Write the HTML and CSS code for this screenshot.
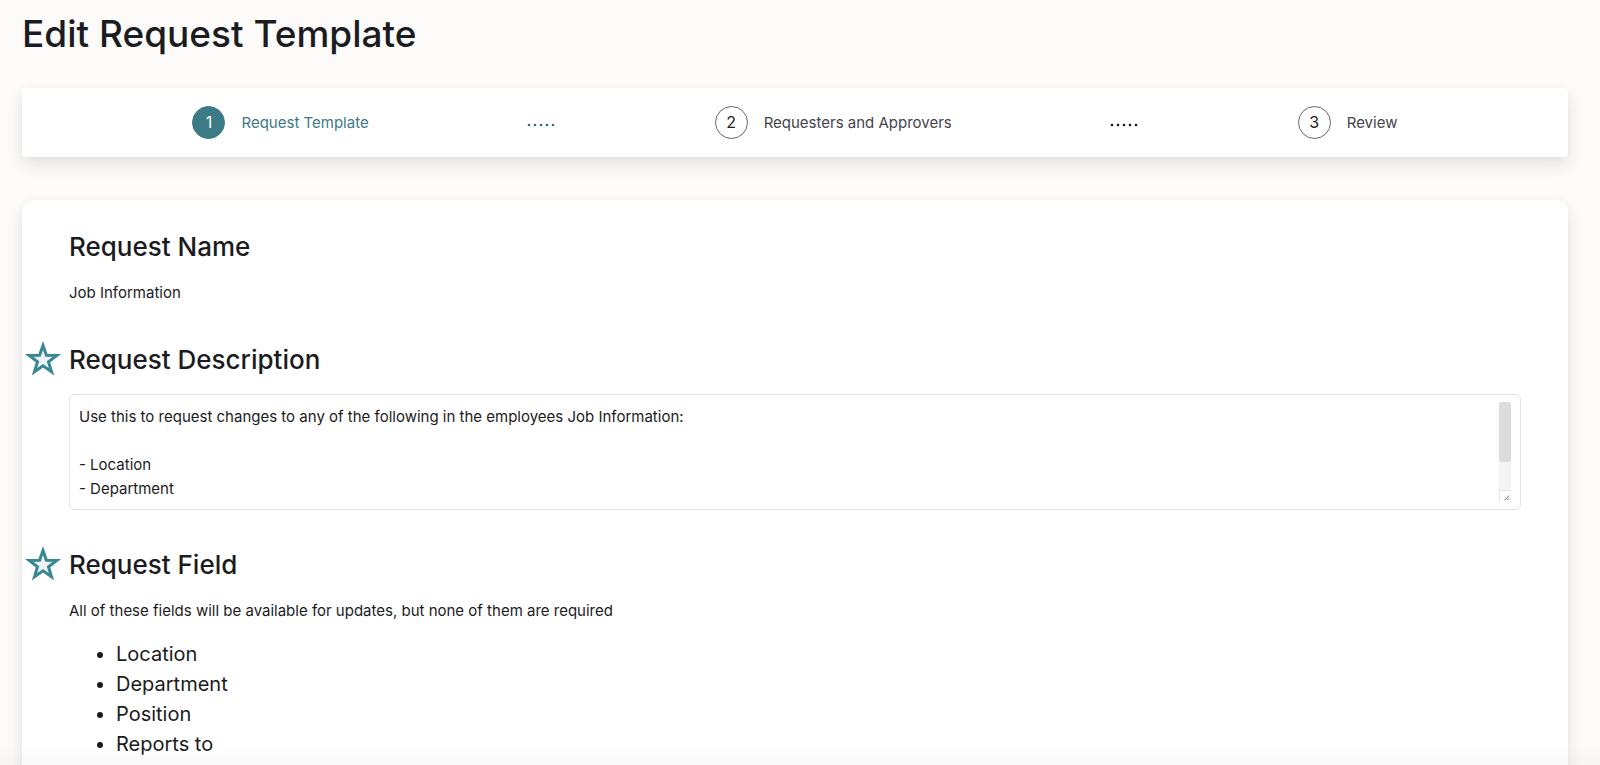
FILE: index.html
```html
<!DOCTYPE html>
<html lang="en">
<head>
    <meta charset="UTF-8">
    <meta name="viewport" content="width=device-width, initial-scale=1.0">
    <title>Edit Request Template</title>
    <link rel="stylesheet" href="styles.css">
</head>
<body>
    <main class="page">
        <h1>Edit Request Template</h1>

        <!-- Wizard steps -->
        <div class="stepper">
            <div class="step active">
                <span class="step-number">1</span>
                <span class="step-label">Request Template</span>
            </div>
            <svg class="dots active" width="29" height="5" viewBox="0 0 29 5" aria-hidden="true">
                <circle cx="2" cy="3" r="1.3"/><circle cx="8" cy="3" r="1.3"/><circle cx="14" cy="3" r="1.3"/><circle cx="20" cy="3" r="1.3"/><circle cx="26" cy="3" r="1.3"/>
            </svg>
            <div class="step">
                <span class="step-number">2</span>
                <span class="step-label">Requesters and Approvers</span>
            </div>
            <svg class="dots" width="29" height="5" viewBox="0 0 29 5" aria-hidden="true">
                <circle cx="2" cy="3" r="1.3"/><circle cx="8" cy="3" r="1.3"/><circle cx="14" cy="3" r="1.3"/><circle cx="20" cy="3" r="1.3"/><circle cx="26" cy="3" r="1.3"/>
            </svg>
            <div class="step">
                <span class="step-number">3</span>
                <span class="step-label">Review</span>
            </div>
        </div>

        <div class="card">
            <section class="section">
                <h2>Request Name</h2>
                <p>Job Information</p>
            </section>

            <section class="section">
                <h2>
                    <svg class="star" viewBox="0 0 38 36" aria-hidden="true">
                        <path d="M19 5.5 L22.4 15.3 L32.8 15.5 L24.5 21.8 L27.5 31.7 L19 25.8 L10.5 31.7 L13.5 21.8 L5.2 15.5 L15.6 15.3 Z"/>
                    </svg>
                    <label for="description">Request Description</label>
                </h2>
                <div class="text-box">
                    <textarea id="description">Use this to request changes to any of the following in the employees Job Information:

- Location
- Department
- Position
- Reports to</textarea>
                    <div class="scrollbar" aria-hidden="true">
                        <div class="track"><div class="thumb"></div></div>
                        <svg class="grip" width="12" height="12" viewBox="0 0 12 12">
                            <path d="M5 10 L10 5 M8 10 L10 8"/>
                        </svg>
                    </div>
                </div>
            </section>

            <section class="section">
                <h2>
                    <svg class="star" viewBox="0 0 38 36" aria-hidden="true">
                        <path d="M19 5.5 L22.4 15.3 L32.8 15.5 L24.5 21.8 L27.5 31.7 L19 25.8 L10.5 31.7 L13.5 21.8 L5.2 15.5 L15.6 15.3 Z"/>
                    </svg>
                    Request Field
                </h2>
                <p>All of these fields will be available for updates, but none of them are required</p>
                <ul class="fields">
                    <li>Location</li>
                    <li>Department</li>
                    <li>Position</li>
                    <li>Reports to</li>
                </ul>
            </section>
        </div>
    </main>
</body>
</html>
```

FILE: styles.css
```css
* { box-sizing: border-box; }
body { margin: 0; background: #fcfbf9; color: #1b1b22; font-family: Inter, "Liberation Sans", sans-serif; font-size: 15px; line-height: 24px; }
.page { padding: 8px 32px 0 22px; }
h1 { margin: 0 0 28px; font-size: 37px; font-weight: 500; line-height: 52px; }

/* soft shade along the bottom of the window */
body::after {
    content: "";
    position: fixed;
    left: 0;
    right: 0;
    bottom: 0;
    height: 20px;
    background: linear-gradient(rgba(0, 0, 0, 0), rgba(0, 0, 0, 0.02));
    pointer-events: none;
}

.stepper {
    display: flex;
    align-items: center;
    justify-content: space-evenly;
    padding: 18px 12px;
    margin-bottom: 43px;
    background: #fff;
    border-radius: 4px;
    box-shadow: 0 8px 16px rgba(40, 40, 40, 0.1), 0 0 8px rgba(40, 40, 40, 0.03);
}
.step { display: flex; align-items: center; gap: 16px; }
.step-number {
    width: 33px;
    height: 33px;
    border: 1px solid #66666c;
    border-radius: 50%;
    font-size: 16px;
    line-height: 31px;
    text-align: center;
}
.step-label { color: #44444c; }
.step.active .step-number { background: #3c7a85; border-color: #3c7a85; color: #fff; }
.step.active .step-label { color: #3c7a85; }
.dots { margin-top: 4px; fill: #1b1b22; }
.dots.active { fill: #2d7280; }

.card {
    padding: 31px 47px;
    background: #fff;
    border-radius: 12px;
    box-shadow: 0 8px 16px rgba(40, 40, 40, 0.1), 0 0 8px rgba(40, 40, 40, 0.03);
}
.section { margin-bottom: 39px; }
h2 { position: relative; margin: 0 0 18px; font-size: 26px; font-weight: 500; line-height: 32px; }
p { margin: 0; }

/* star sits in the gutter left of the heading */
.star { position: absolute; left: -45px; top: -4px; width: 38px; height: 36px; fill: #eef4f8; stroke: #3a8794; stroke-width: 3; }

.text-box { display: flex; padding: 7px 9px; border: 1px solid #e4e4e4; border-radius: 5px; }
textarea {
    flex: 1;
    height: 100px;
    padding: 3px 0 0;
    border: 0;
    outline: 0;
    resize: none;
    scrollbar-width: none;
    background: none;
    color: inherit;
    font: inherit;
}
.scrollbar { display: flex; flex-direction: column; width: 12px; }
.track { flex: 1; background: #f4f4f4; }
.thumb { height: 68%; background: #dcdcdc; border-radius: 3px; }
.grip { border-top: 1px solid #e4e4e4; border-left: 1px solid #e4e4e4; fill: none; stroke: #555; }

.fields { margin: 16px 0 0; padding-left: 47px; font-size: 20px; line-height: 30px; }
```
